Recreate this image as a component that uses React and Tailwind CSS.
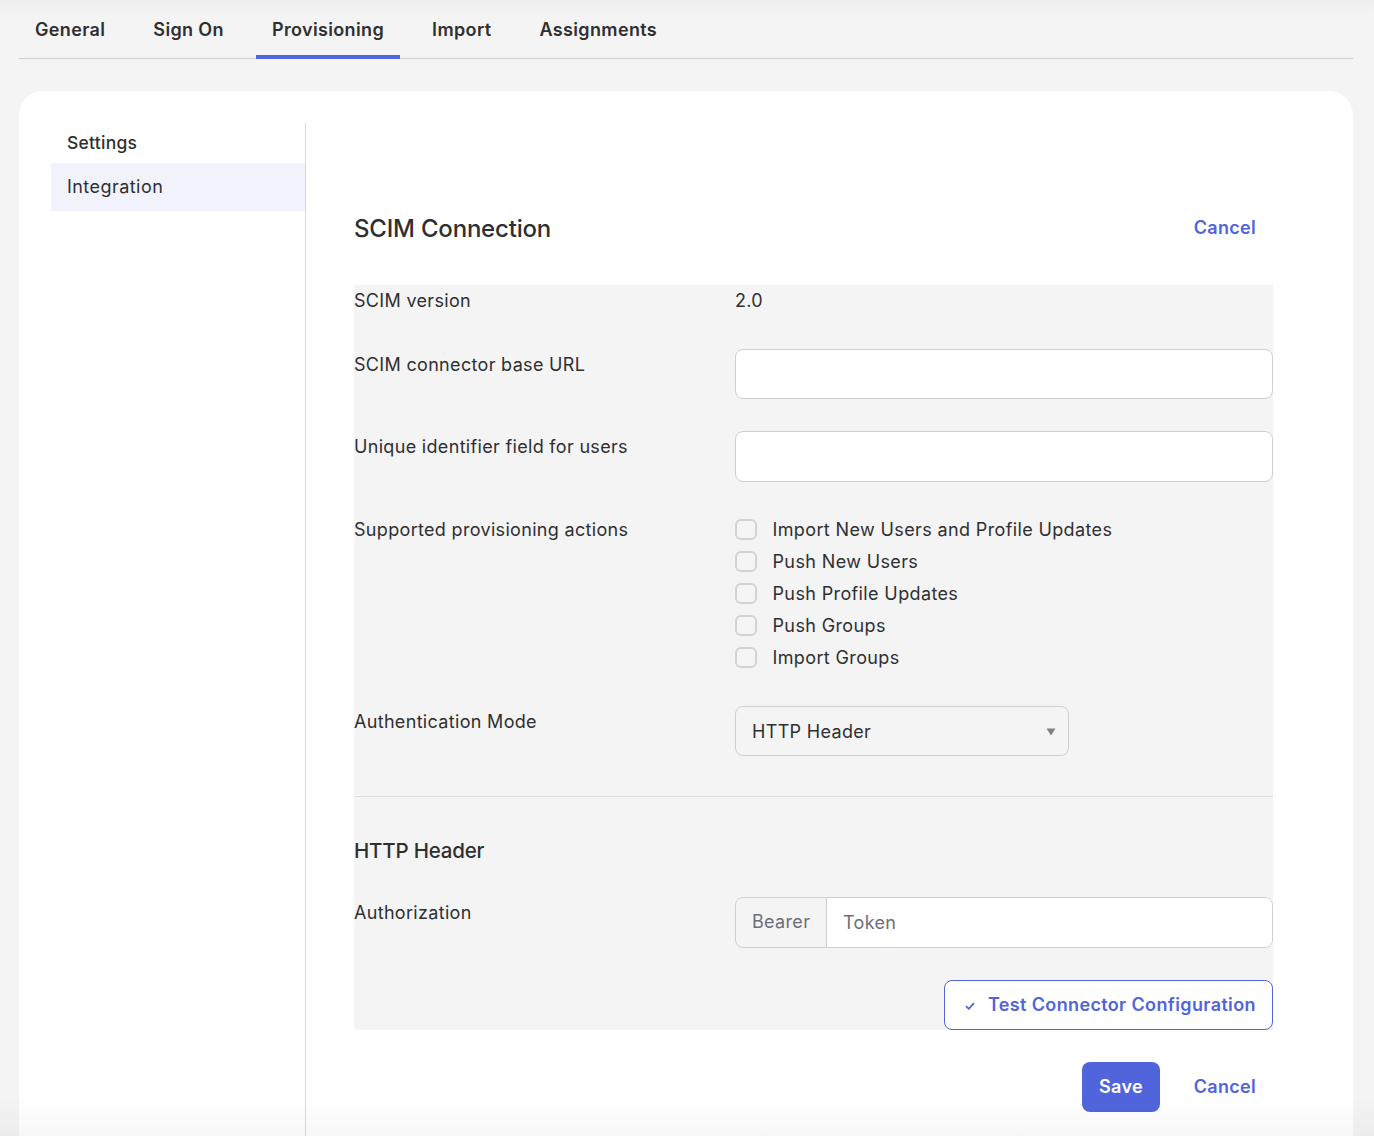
import React from "react";

const font = { fontFamily: "Inter, sans-serif" };

function Row({ label, children, className = "" }) {
  return (
    <div className={`flex ${className}`}>
      <div className="w-[381px] shrink-0 text-[18px] leading-8 tracking-[0.32px] text-[#2f2f31]">{label}</div>
      <div className="flex-1 min-w-0">{children}</div>
    </div>
  );
}

function Check({ label }) {
  return (
    <div className="flex h-8 items-center text-[18px] leading-[30px] tracking-[0.37px] text-[#2f2f31]">
      <span className="-mt-0.5 mr-[15.5px] h-[21px] w-[22px] rounded-[6px] border-2 border-[#d3d3d3] bg-[#f5f5f5]" />
      <span>{label}</span>
    </div>
  );
}

export default function App() {
  const tabs = ["General", "Sign On", "Provisioning", "Import", "Assignments"];
  return (
    <div className="relative h-[1136px] overflow-hidden bg-[#f4f4f4] pl-[19px] pr-[21px]" style={font}>
      <div className="absolute inset-x-0 top-0 h-4 bg-gradient-to-b from-[#eeeeee] to-[#f4f4f4]" />
      <div className="relative flex h-[59px] gap-4 border-b border-[#cfcfcf]">
        {tabs.map((t) => (
          <div
            key={t}
            className={`flex h-[59px] items-start px-4 pt-[14px] text-[18px] font-semibold leading-8 tracking-[0.36px] text-[#2f2f31] ${t === "Provisioning" ? "border-b-4 border-[#5064dc]" : ""}`}
          >
            {t}
          </div>
        ))}
      </div>
      <div className="mt-8 flex h-[1100px] rounded-t-3xl bg-white pl-8 pt-8">
        <div className="w-[255px] shrink-0 border-r border-[#d9d9d9]">
          <div className="h-10 pl-4 pt-1 text-[17.5px] font-medium leading-8 tracking-[0.25px] text-[#2f2f31]">Settings</div>
          <div className="h-12 bg-[#f1f2fc] pl-4 pt-2 text-[18px] leading-8 tracking-[0.45px] text-[#2f2f31]">Integration</div>
        </div>
        <div className="w-[967px] pl-12">
          <div className="flex h-[162px] items-start justify-between pt-[90px]">
            <div className="text-[24px] font-medium leading-8 tracking-[-0.2px] text-[#2f2f31]">SCIM Connection</div>
            <div className="mt-px pr-[17px] text-[18px] font-semibold leading-7 tracking-[0.3px] text-[#5064dc]">Cancel</div>
          </div>
          <div className="bg-[#f4f4f4]">
            <Row label="SCIM version">
              <div className="text-[18px] leading-8 tracking-[0.32px] text-[#2f2f31]">2.0</div>
            </Row>
            <Row label="SCIM connector base URL" className="mt-8">
              <div className="h-[50px] rounded-lg border border-[#cfcfcf] bg-white" />
            </Row>
            <Row label="Unique identifier field for users" className="mt-8">
              <div className="h-[51px] rounded-lg border border-[#cfcfcf] bg-white" />
            </Row>
            <Row label="Supported provisioning actions" className="mt-8">
              <Check label="Import New Users and Profile Updates" />
              <Check label="Push New Users" />
              <Check label="Push Profile Updates" />
              <Check label="Push Groups" />
              <Check label="Import Groups" />
            </Row>
            <Row label="Authentication Mode" className="mt-8">
              <div className="flex h-[50px] w-[334px] items-center justify-between rounded-lg border border-[#cfcfcf] pl-4 pr-3 text-[18px] tracking-[0.32px] text-[#2f2f31]">
                <span>HTTP Header</span>
                <svg width="10" height="8" viewBox="0 0 10 8" className="mt-0.5"><path d="M0.5 0.5H9.5L5 7.5Z" fill="#808080" /></svg>
              </div>
            </Row>
            <div className="mt-10 border-t border-[#dcdcdc]" />
            <div className="mt-[38px] text-[20.5px] font-medium leading-8 tracking-[-0.2px] text-[#2f2f31]">HTTP Header</div>
            <Row label="Authorization" className="mt-[30px]">
              <div className="flex h-[51px] overflow-hidden rounded-lg border border-[#cfcfcf]">
                <div className="flex w-[91px] items-center border-r border-[#cfcfcf] pl-4 pb-0.5 text-[18px] tracking-[0.32px] text-[#6e6e78]">Bearer</div>
                <div className="flex flex-1 items-center bg-white pl-4 text-[18px] tracking-[0.32px] text-[#6e6e78]">Token</div>
              </div>
            </Row>
            <div className="mt-8 flex justify-end">
              <div className="flex h-[50px] w-[329px] items-center rounded-lg border border-[#5064dc] bg-white pl-5 text-[18px] font-semibold tracking-[0.36px] text-[#5064dc]">
                <svg width="10" height="8" viewBox="0 0 10 8" fill="none" className="mr-[13px] mt-0.5"><path d="M1 4.2L3.8 6.8L9 1.2" stroke="#5064dc" strokeWidth="1.8" /></svg>
                <span className="-mt-0.5">Test Connector Configuration</span>
              </div>
            </div>
          </div>
          <div className="mt-8 flex items-center justify-end">
            <div className="flex h-[50px] w-[78px] items-center justify-center rounded-lg bg-[#5064dc] pb-0.5 text-[18px] font-semibold tracking-[0.36px] text-white">Save</div>
            <div className="w-[113px] pb-0.5 pr-[17px] text-right text-[18px] font-semibold tracking-[0.3px] text-[#5064dc]">Cancel</div>
          </div>
        </div>
      </div>
      <div className="absolute inset-x-0 bottom-0 h-[40px] bg-gradient-to-b from-transparent to-[#00000008]" />
    </div>
  );
}
